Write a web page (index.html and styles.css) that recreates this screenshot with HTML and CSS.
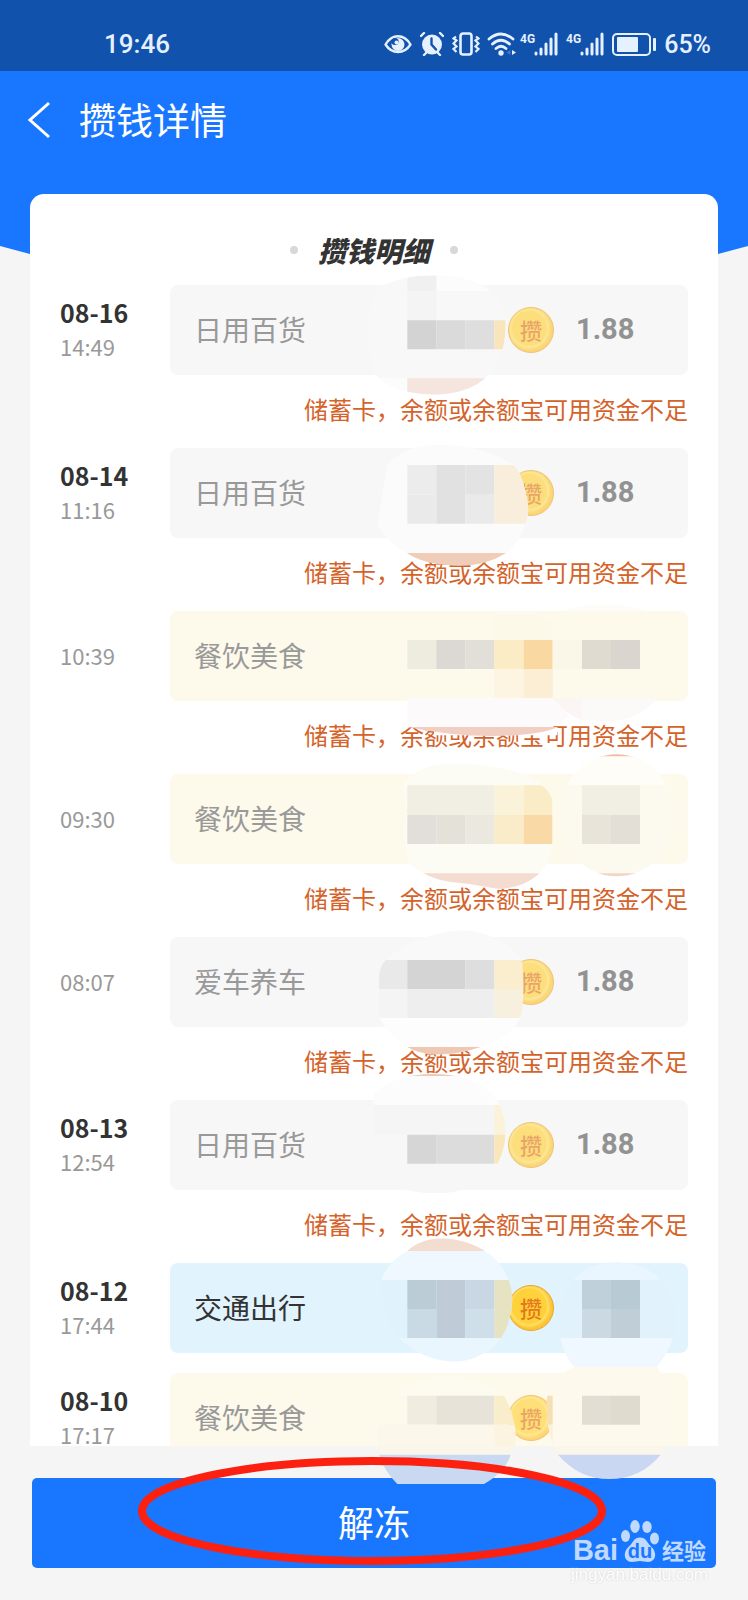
FILE: index.html
```
<!DOCTYPE html>
<html lang="zh-CN">
<head>
    <meta charset="UTF-8">
    <meta name="viewport" content="width=device-width, initial-scale=1.0">
    <title>攒钱详情</title>
    <link rel="stylesheet" href="styles.css">
</head>
<body>
    <header class="header">
        <!-- Status Bar -->
        <div class="status-bar">
            <span class="clock">19:46</span>
            <div class="status-icons">
                <svg width="28" height="24" viewBox="0 0 28 24">
                    <path d="M1.500 12.500C8 1.500 20 1.500 26.500 12.500C20 22.500 8 22.500 1.500 12.500Z" fill="none" stroke="#e6f1ff" stroke-width="2.400" stroke-linejoin="round"/>
                    <circle cx="14" cy="12.500" r="6.500" fill="#e6f1ff"/>
                    <circle cx="11" cy="9.500" r="3.600" fill="#1152ad"/>
                    <circle cx="12.500" cy="10.500" r="2" fill="#e6f1ff"/>
                </svg>
                <svg width="24" height="24" viewBox="0 0 24 24">
                    <circle cx="12" cy="12.500" r="10" fill="#e6f1ff"/>
                    <path d="M1 4l3-3M23 4l-3-3M4 23l3-3M20 23l-3-3" stroke="#e6f1ff" stroke-width="2.400" stroke-linecap="round"/>
                    <path d="M11.500 6.500v6l4.500 5" fill="none" stroke="#1152ad" stroke-width="2.400" stroke-linecap="round"/>
                </svg>
                <svg width="28" height="24" viewBox="0 0 28 24" fill="none" stroke="#e6f1ff">
                    <rect x="8.500" y="1.500" width="11" height="21" rx="2.500" stroke-width="2.600"/>
                    <path d="M4 4.500l-2.500 2 3 2-3 3 3 3-3 2.500 3 3M24 4.500l2.500 2-3 2 3 3-3 3 3 2.500-3 3" stroke-width="2.200"/>
                </svg>
                <svg class="wifi" width="24" height="24" viewBox="0 0 24 24">
                    <path d="M1 7Q13-3 25 7M4.500 12Q13 4.500 21.500 12M8 16.500Q13 12 18 16.500" fill="none" stroke="#e6f1ff" stroke-width="2.800" stroke-linecap="round"/>
                    <circle cx="13" cy="21" r="2.700" fill="#e6f1ff"/>
                    <path d="M24 18v5l4-2.500Z" fill="#e6f1ff"/>
                    <path d="M22.500 18v5l-4-2.500Z" fill="#3f75c4"/>
                </svg>
                <svg class="signal" width="38" height="24" viewBox="0 0 38 24">
                    <text x="0" y="11">4G</text>
                    <path d="M16 21v1M21 17v5M26 12v10M31 7v15M36 2v20"/>
                </svg>
                <svg class="signal" width="38" height="24" viewBox="0 0 38 24">
                    <text x="0" y="11">4G</text>
                    <path d="M16 21v1M21 17v5M26 12v10M31 7v15M36 2v20"/>
                </svg>
                <svg width="44" height="24" viewBox="0 0 44 24">
                    <rect x="1" y="2" width="37" height="21" rx="4" fill="none" stroke="#e6f1ff" stroke-width="2"/>
                    <rect x="5" y="5" width="21" height="15" rx="1" fill="#e6f1ff"/>
                    <rect x="41" y="6" width="3" height="13" rx="1" fill="#e6f1ff"/>
                </svg>
                <span class="battery-level">65%</span>
            </div>
        </div>

        <!-- Navigation -->
        <nav class="nav">
            <button type="button" class="back" aria-label="返回">
                <svg width="24" height="38" viewBox="0 0 24 38"><path d="M22 2L3 19l19 17" fill="none" stroke="#fff" stroke-width="3"/></svg>
            </button>
            <h1>攒钱详情</h1>
        </nav>
    </header>

    <!-- Savings Records -->
    <main class="card">
        <h2 class="card-title"><span>攒钱明细</span></h2>
        <ul class="records">
            <li class="record">
                <div class="when"><strong>08-16</strong><time>14:49</time></div>
                <div class="entry">
                    <span class="category">日用百货</span>
                    <span class="coin">攒</span>
                    <span class="amount">1.88</span>
                    <svg class="mosaic" viewBox="-48 -46 990 510">
                        <clipPath id="m1"><path d="M10 55Q80 15 187 15Q395 25 395 165Q390 365 187 373Q60 372 0 310Q-40 150 10 55Z"/></clipPath>
                        <g clip-path="url(#m1)">
                            <path fill="#f8f8f8" d="M-48 15h450v360H-48z"/>
                            <path fill="#fcfcfc" d="M187 15h220v47H187z"/>
                            <path fill="#f0f0f0" d="M100 15h87v47h-87z"/>
                            <path fill="#f4f4f4" d="M100 62h87v88h-87z"/>
                            <path fill="#d3d3d3" d="M100 150h87v87h-87z"/>
                            <path fill="#dadada" d="M187 150h87v87h-87z"/>
                            <path fill="#dedede" d="M274 150h87v87h-87z"/>
                            <path fill="#f9e5bb" d="M361 150h40v87h-40z"/>
                            <path fill="#fcfcfc" d="M-48 324h148v60H-48z"/>
                            <path fill="#f6e5de" d="M100 324h300v60H100z"/>
                        </g>
                    </svg>
                </div>
                <p class="note">储蓄卡，余额或余额宝可用资金不足</p>
            </li>

            <li class="record">
                <div class="when"><strong>08-14</strong><time>11:16</time></div>
                <div class="entry">
                    <span class="category">日用百货</span>
                    <span class="coin">攒</span>
                    <span class="amount">1.88</span>
                    <svg class="mosaic" viewBox="-48 444 990 510">
                        <clipPath id="m2"><path d="M40 585Q90 525 190 525Q330 525 420 585Q455 630 463 720Q455 800 395 850Q330 890 250 887Q150 885 100 850Q40 820 10 761Z"/></clipPath>
                        <g clip-path="url(#m2)">
                            <path fill="#fbfbfb" d="M0 520h470v330H0z"/>
                            <path fill="#ececec" d="M100 585h87v89h-87z"/>
                            <path fill="#e1e1e1" d="M187 585h87v176h-87z"/>
                            <path fill="#e3e3e3" d="M274 585h87v89h-87z"/>
                            <path fill="#eaeaea" d="M100 674h87v87h-87zM274 674h87v87h-87z"/>
                            <path fill="#f8eedb" d="M361 585h110v176H361z"/>
                            <path fill="#fff" d="M0 849h100v50H0z"/>
                            <path fill="#efcdb9" d="M100 849h300v50H100z"/>
                        </g>
                    </svg>
                </div>
                <p class="note">储蓄卡，余额或余额宝可用资金不足</p>
            </li>

            <li class="record">
                <div class="when"><time>10:39</time></div>
                <div class="entry food">
                    <span class="category">餐饮美食</span>
                    <svg class="mosaic" viewBox="-48 -57 990 510">
                        <path fill="#fdf9e8" d="M361 45h90q70 5 85 30v45H361z"/>
                        <path fill="#fefcf8" d="M560 33Q700-5 820 33z"/>
                        <path fill="#eeebdf" d="M100 120h87v87h-87z"/>
                        <path fill="#dcd9d4" d="M187 120h87v87h-87z"/>
                        <path fill="#e2dfd9" d="M274 120h87v87h-87z"/>
                        <path fill="#fbecc6" d="M361 120h88v87h-88z"/>
                        <path fill="#fad8a2" d="M449 120h87v87h-87z"/>
                        <path fill="#faf7e9" d="M536 120h88v87h-88z"/>
                        <path fill="#dfdbd0" d="M624 120h87v87h-87z"/>
                        <path fill="#dad6cf" d="M711 120h87v87h-87z"/>
                        <path fill="#fdf5e2" d="M361 207h88v87h-88z"/>
                        <path fill="#fbeed4" d="M449 207h87v87h-87z"/>
                        <path fill="#fcfafa" d="M100 294h436l50 55-50 32H100z"/>
                        <path fill="#fbf6f4" d="M536 294h88v66q-50-15-88-66z"/>
                        <path fill="#fcfaf9" d="M624 294h226q-60 72-160 70l-66-4z"/>
                        <path fill="#fff" d="M180 381h370v25H180z"/>
                        <path fill="#f0cfc2" d="M100 381h452q-60 27-200 27-120 0-252-27z"/>
                    </svg>
                </div>
                <p class="note">储蓄卡，余额或余额宝可用资金不足</p>
            </li>

            <li class="record">
                <div class="when"><time>09:30</time></div>
                <div class="entry food">
                    <span class="category">餐饮美食</span>
                    <svg class="mosaic" viewBox="-48 431 990 510">
                        <clipPath id="m4"><path d="M85 555Q130 495 215 490Q400 490 480 535Q536 575 536 610V731Q530 790 490 825Q440 866 370 865Q300 850 230 845Q160 835 105 790Q80 700 100 640Z"/></clipPath>
                        <g clip-path="url(#m4)">
                            <path fill="#fdfcf4" d="M70 480h480v400H70z"/>
                            <path fill="#f1eee3" d="M100 555h261v89H100z"/>
                            <path fill="#faf3d9" d="M361 555h88v89h-88z"/>
                            <path fill="#faecc6" d="M449 555h87v89h-87z"/>
                            <path fill="#e2dfdb" d="M100 644h87v87h-87z"/>
                            <path fill="#e4e1d9" d="M187 644h87v87h-87z"/>
                            <path fill="#ebe8df" d="M274 644h87v87h-87z"/>
                            <path fill="#faecc8" d="M361 644h88v87h-88z"/>
                            <path fill="#f9d9a5" d="M449 644h87v87h-87z"/>
                            <path fill="#f4dcd1" d="M100 819h440v50H100z"/>
                        </g>
                        <clipPath id="m4b"><ellipse cx="728" cy="645" rx="172" ry="183"/></clipPath>
                        <g clip-path="url(#m4b)">
                            <path fill="#fcfaef" d="M550 460h360v370H550z"/>
                            <path fill="#fefdf8" d="M550 468h360v87H550z"/>
                            <path fill="#ecc0ab" d="M550 460h360v8H550z"/>
                            <path fill="#f1eee4" d="M624 555h174v89H624z"/>
                            <path fill="#e8e4da" d="M624 644h87v87h-87z"/>
                            <path fill="#e3dfd6" d="M711 644h87v87h-87z"/>
                            <path fill="#f2d5c8" d="M550 819h360v12H550z"/>
                        </g>
                    </svg>
                </div>
                <p class="note">储蓄卡，余额或余额宝可用资金不足</p>
            </li>

            <li class="record">
                <div class="when"><time>08:07</time></div>
                <div class="entry">
                    <span class="category">爱车养车</span>
                    <span class="coin">攒</span>
                    <span class="amount">1.88</span>
                    <svg class="mosaic" viewBox="-48 -39 990 510">
                        <clipPath id="m5"><path d="M35 120Q100 60 200 40Q270 20 340 45Q420 75 445 130Q455 220 440 294Q400 360 320 381Q250 405 180 403Q130 400 100 381Q40 340 15 294V180Q15 140 35 120Z"/></clipPath>
                        <g clip-path="url(#m5)">
                            <path fill="#f9f9f9" d="M0 20h470v100H0z"/>
                            <path fill="#e9e9e9" d="M0 120h100v87H0z"/>
                            <path fill="#d4d4d4" d="M100 120h174v87H100z"/>
                            <path fill="#dedede" d="M274 120h87v87h-87z"/>
                            <path fill="#faeecf" d="M361 120h100v87H361z"/>
                            <path fill="#f4f4f4" d="M0 207h100v87H0z"/>
                            <path fill="#eee" d="M100 207h261v87H100z"/>
                            <path fill="#f8f0df" d="M361 207h100v87H361z"/>
                            <path fill="#fdfdfd" d="M0 294h470v120H0z"/>
                            <path fill="#eec8b3" d="M100 381h230v30H100z"/>
                        </g>
                    </svg>
                </div>
                <p class="note">储蓄卡，余额或余额宝可用资金不足</p>
            </li>

            <li class="record">
                <div class="when"><strong>08-13</strong><time>12:54</time></div>
                <div class="entry">
                    <span class="category">日用百货</span>
                    <span class="coin">攒</span>
                    <span class="amount">1.88</span>
                    <svg class="mosaic" viewBox="-48 450 990 510">
                        <clipPath id="m6"><path d="M0 520Q60 462 180 462Q310 462 370 540Q395 590 395 640Q390 700 370 731Q320 820 180 820Q60 815 0 770Z"/></clipPath>
                        <g clip-path="url(#m6)">
                            <path fill="#fcfcfc" d="M0 460h400v95H0z"/>
                            <path fill="#edc9b6" d="M100 462h160v6H100z"/>
                            <path fill="#f5f5f5" d="M0 555h361v89H0z"/>
                            <path fill="#fbf2da" d="M361 555h40v89h-40z"/>
                            <path fill="#f7f7f7" d="M0 644h100v180H0zM100 731h300v94H100z"/>
                            <path fill="#d6d6d6" d="M100 644h87v87h-87z"/>
                            <path fill="#dcdcdc" d="M187 644h174v87H187z"/>
                            <path fill="#f9e7b9" d="M361 644h40v87h-40z"/>
                        </g>
                    </svg>
                </div>
                <p class="note">储蓄卡，余额或余额宝可用资金不足</p>
            </li>

            <li class="record">
                <div class="when"><strong>08-12</strong><time>17:44</time></div>
                <div class="entry travel">
                    <span class="category">交通出行</span>
                    <span class="coin">攒</span>
                    <span class="amount"></span>
                    <svg class="mosaic" viewBox="-48 9 990 510">
                        <clipPath id="m7"><path d="M22 150Q40 95 100 63Q140 25 210 25Q290 30 350 75Q415 130 415 215Q410 290 370 340Q310 395 240 395Q140 390 75 324Q20 250 22 150Z"/></clipPath>
                        <g clip-path="url(#m7)">
                            <path fill="#e0f2fb" d="M0 150h420v174H0z"/>
                            <path fill="#f0f8ff" d="M0 63h420v87H0z"/>
                            <path fill="#f3dcd0" d="M100 20h240v43H100z"/>
                            <path fill="#bcccd6" d="M100 150h87v87h-87z"/>
                            <path fill="#bfccd8" d="M187 150h87v174h-87z"/>
                            <path fill="#c8d7e3" d="M274 150h87v87h-87z"/>
                            <path fill="#c9dae4" d="M100 237h87v87h-87z"/>
                            <path fill="#cfdfea" d="M274 237h87v87h-87z"/>
                            <path fill="#e6e3c3" d="M361 150h60v174h-60z"/>
                            <path fill="#eaf6fe" d="M0 324h420v80H0z"/>
                        </g>
                        <clipPath id="m7b"><path d="M556 310Q550 97 735 97Q905 110 905 290Q890 370 830 430H620Q570 390 556 310Z"/></clipPath>
                        <g clip-path="url(#m7b)">
                            <path fill="#e1f2fc" d="M540 90h370v234H540z"/>
                            <path fill="#e9f6ff" d="M540 90h370v60H540z"/>
                            <path fill="#c0d0da" d="M624 150h87v87h-87z"/>
                            <path fill="#b8cad4" d="M711 150h87v87h-87z"/>
                            <path fill="#cad9e2" d="M624 237h87v87h-87z"/>
                            <path fill="#bfced7" d="M711 237h87v87h-87z"/>
                            <path fill="#eff8ff" d="M540 324h370v110H540z"/>
                        </g>
                    </svg>
                </div>
            </li>

            <li class="record">
                <div class="when"><strong>08-10</strong><time>17:17</time></div>
                <div class="entry food">
                    <span class="category">餐饮美食</span>
                    <span class="coin">攒</span>
                    <span class="amount"></span>
                    <svg class="mosaic" viewBox="-48 340 990 510">
                        <clipPath id="m8"><path d="M70 498Q120 440 220 440Q330 445 390 498Q430 570 425 640L410 674H10V600Z"/></clipPath>
                        <g clip-path="url(#m8)">
                            <path fill="#fdfaf0" d="M0 430h430v68H0z"/>
                            <path fill="#f0ece0" d="M100 498h87v87h-87z"/>
                            <path fill="#e7e3d9" d="M187 498h174v87H187z"/>
                            <path fill="#faedcb" d="M361 498h70v87h-70z"/>
                            <path fill="#fbf7eb" d="M0 585h361v90H0z"/>
                            <path fill="#fcf4e0" d="M361 585h70v90h-70z"/>
                        </g>
                        <clipPath id="m8b"><path d="M520 498Q550 430 600 412H850Q890 480 892 560Q890 630 860 674H550Q510 590 520 498Z"/></clipPath>
                        <g clip-path="url(#m8b)">
                            <path fill="#fdf9ed" d="M500 412h400v263H500z"/>
                            <path fill="#f6dfb2" d="M500 498h36v87h-36z"/>
                            <path fill="#faf1dc" d="M500 585h36v90h-36z"/>
                            <path fill="#e2ded3" d="M624 498h87v87h-87z"/>
                            <path fill="#dfdbcf" d="M711 498h87v87h-87z"/>
                        </g>
                    </svg>
                </div>
            </li>
        </ul>
    </main>

    <!-- Bottom Action -->
    <footer class="footer">
        <button type="button" class="unfreeze">解冻</button>
        <svg class="mosaic-tail" width="330" height="42" viewBox="-48 648 990 126">
            <path fill="#fbf6ea" d="M12 648h409l-11 26H15z"/>
            <path fill="#fbf6ea" d="M535 648h340l-15 26H552z"/>
            <path fill="#c9d9f2" d="M15 674h395q-15 50-80 88H70q-40-40-55-88z"/>
            <path fill="#c9d7f2" d="M552 674h308q-60 73-155 73-90 0-153-73z"/>
        </svg>
        <svg class="circle-mark" viewBox="0 0 480 120">
            <ellipse cx="238" cy="60" rx="230" ry="50" fill="none" stroke="#fc2010" stroke-width="8"/>
        </svg>
        <div class="watermark">
            <div class="brand">
                <span class="bai">Bai</span>
                <svg width="40" height="43" viewBox="0 0 40 43">
                    <g fill="#c0d9ff">
                        <ellipse cx="5.500" cy="16" rx="4.500" ry="6"/>
                        <ellipse cx="15" cy="6.500" rx="4.700" ry="6.500"/>
                        <ellipse cx="27" cy="7" rx="4.700" ry="6"/>
                        <ellipse cx="34.500" cy="18.500" rx="4.500" ry="6"/>
                        <path d="M20 17.500c6 0 7 5 11 9c6 5 6 15-3 15.500c-3 0-5-1-8-1s-5 1-8 1c-9-.5-9-10.500-3-15.500c4-4 5-9 11-9Z"/>
                    </g>
                    <text class="du" x="20" y="38" text-anchor="middle">du</text>
                </svg>
                <span class="jingyan">经验</span>
            </div>
            <span class="site">jingyan.baidu.com</span>
        </div>
    </footer>
</body>
</html>
```
FILE: styles.css
```
/* General Styles */
* {
    box-sizing: border-box;
}

body {
    margin: 0;
    height: 100vh;
    display: flex;
    flex-direction: column;
    font-family: "Noto Sans CJK SC", sans-serif;
    background-color: #f5f5f5;
    overflow: hidden;
}

h1, h2, p, ul {
    margin: 0;
    padding: 0;
}

button {
    border: none;
    padding: 0;
    color: #fff;
    font-family: inherit;
    cursor: pointer;
}

/* Header, pointed at the bottom behind the card */
.header {
    flex: none;
    padding-bottom: 177px;
    background-color: #1977ff;
    color: #fff;
    clip-path: polygon(0 0, 100% 0, 100% calc(100% - 100px), 50% 100%, 0 calc(100% - 100px));
}

.status-bar {
    display: flex;
    justify-content: space-between;
    align-items: center;
    height: 71px;
    padding: 17px 37px 0 104px;
    background-color: #1152ad;
    color: #e6f1ff;
    font-family: Roboto, sans-serif;
    font-size: 26px;
    font-weight: 500;
}

.status-icons {
    display: flex;
    align-items: center;
    gap: 8px;
}

.battery-level {
    font-size: 25px;
}

.wifi {
    overflow: visible;
}

.signal text {
    fill: #e6f1ff;
    font: 700 12px Roboto, sans-serif;
}

.signal path {
    stroke: #e6f1ff;
    stroke-width: 3;
    stroke-linecap: round;
}

.nav {
    display: flex;
    align-items: center;
    gap: 28px;
    height: 98px;
    padding-left: 27px;
}

.nav h1 {
    padding-bottom: 3px;
    font-size: 37px;
    font-weight: 400;
}

.back {
    display: flex;
    background: none;
}

/* Card */
.card {
    position: relative;
    flex: 1;
    min-height: 0;
    margin: -152px 30px 0;
    padding: 36px 30px 0;
    background-color: #fff;
    border-radius: 14px 14px 0 0;
    overflow: hidden;
}

.card-title {
    display: flex;
    justify-content: center;
    align-items: center;
    gap: 20px;
    padding-bottom: 15px;
    color: #333;
    font-size: 28px;
    font-weight: 900;
    font-style: italic;
    line-height: 40px;
}

.card-title::before,
.card-title::after {
    content: "";
    width: 8px;
    height: 8px;
    border-radius: 50%;
    background-color: #d8d8d8;
}

/* Records */
.records {
    list-style: none;
}

.record {
    display: grid;
    grid-template-columns: 110px 1fr;
    grid-template-rows: 90px;
    margin-bottom: 20px;
}

.record:has(.note) {
    margin-bottom: 6px;
}

.when {
    display: flex;
    flex-direction: column;
    justify-content: center;
    padding-bottom: 3px;
    color: #999;
    font-size: 22px;
    line-height: 34px;
}

.when strong {
    color: #333;
    font-size: 25px;
}

.entry {
    position: relative;
    display: flex;
    align-items: center;
    padding: 0 54px 0 24px;
    border-radius: 8px;
    background-color: #f7f7f7;
    color: #999;
    font-size: 28px;
}

.entry.food {
    background-color: #fdf9eb;
}

.entry.travel {
    background-color: #e1f3fd;
}

.travel .category {
    color: #333;
}

.category {
    flex: 1;
    padding-bottom: 3px;
}

.coin {
    width: 46px;
    height: 46px;
    margin-right: 22px;
    border: 1px solid #eda32a;
    border-radius: 50%;
    background: radial-gradient(circle at 46% 46%, #ffd23c 50%, #ffdf62 56%, #fdc534 66%);
    color: #e27a1c;
    font-size: 22px;
    font-weight: 500;
    line-height: 42px;
    text-align: center;
    opacity: 0.65;
}

.travel .coin {
    opacity: 1;
}

.amount {
    width: 58px;
    padding-bottom: 3px;
    color: #929292;
    font-family: Roboto, sans-serif;
    font-size: 29px;
    font-weight: 700;
}

.note {
    grid-column: 1 / -1;
    color: #d4632b;
    font-size: 24px;
    line-height: 67px;
    text-align: right;
    white-space: nowrap;
}

/* Pixelated patches over the private values */
.mosaic {
    position: absolute;
    top: -30px;
    right: 0;
    z-index: 1;
    width: 330px;
    height: 170px;
}

/* Bottom Action */
.footer {
    position: relative;
    flex: none;
    padding: 32px;
}

.unfreeze {
    display: block;
    width: 100%;
    height: 90px;
    padding-bottom: 4px;
    border-radius: 5px;
    background-color: #1977ff;
    font-size: 36px;
}

.mosaic-tail {
    position: absolute;
    top: 0;
    right: 60px;
}

.circle-mark {
    position: absolute;
    top: 5px;
    left: calc(50% - 240px);
    width: 480px;
    height: 120px;
}

.watermark {
    position: absolute;
    right: 40px;
    bottom: 13px;
    display: flex;
    flex-direction: column;
    align-items: center;
}

.brand {
    display: flex;
    align-items: flex-end;
    gap: 2px;
    color: #c0d9ff;
    font-weight: 700;
}

.bai {
    font-family: "Liberation Sans", Arial, sans-serif;
    font-size: 29px;
    line-height: 26px;
}

.du {
    fill: #1977ff;
    font: 700 20px "Liberation Sans", Arial, sans-serif;
}

.jingyan {
    font-size: 22px;
    line-height: 28px;
}

.site {
    color: #fff;
    font-family: "Liberation Sans", Arial, sans-serif;
    font-size: 17px;
    line-height: 24px;
    text-shadow: 0 0 2px #ccc;
}
```
